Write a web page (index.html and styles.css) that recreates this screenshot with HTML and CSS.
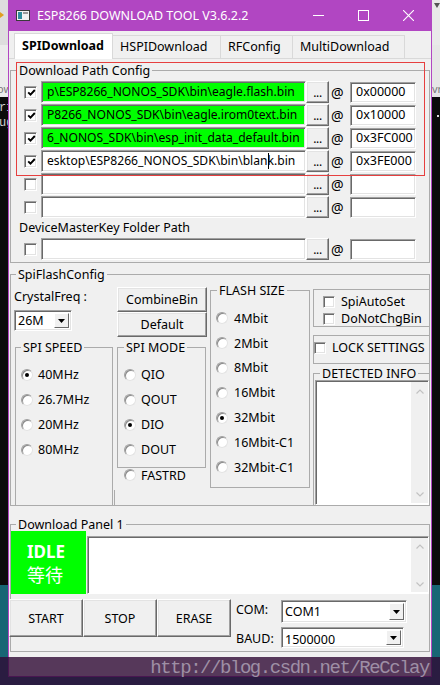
FILE: index.html
```html
<!DOCTYPE html>
<html lang="en">
<head>
<meta charset="utf-8">
<title>ESP8266 DOWNLOAD TOOL V3.6.2.2</title>
<link rel="stylesheet" href="styles.css">
</head>
<body>
<div class="desk">
  <div class="strip">
    <div class="bg-top"><span class="ymark"></span></div>
    <div class="bg-light"><span class="peek">ow</span></div>
    <div class="bg-black"><span class="con">r1</span><span class="con">ug</span></div>
    <div class="bg-teal"></div>
  </div>

  <div class="window">
    <div class="titlebar">
      <svg class="appicon" width="14" height="11" viewBox="0 0 14 11">
        <rect x="0.5" y="0.5" width="13" height="10" fill="#f2f2f2" stroke="#3a3a3a"/>
        <rect x="2" y="2" width="4" height="7" fill="#2f8c9e"/>
        <rect x="7" y="2" width="5" height="2" fill="#9a9a9a"/>
      </svg>
      <span class="title">ESP8266 DOWNLOAD TOOL V3.6.2.2</span>
      <span class="wbtn"><svg width="11" height="1" viewBox="0 0 11 1"><rect width="11" height="1" fill="#fff"/></svg></span>
      <span class="wbtn"><svg width="11" height="11" viewBox="0 0 11 11"><rect x="0.5" y="0.5" width="10" height="10" fill="none" stroke="#fff"/></svg></span>
      <span class="wbtn"><svg width="11" height="11" viewBox="0 0 11 11"><path d="M0 0L11 11M11 0L0 11" stroke="#fff" stroke-width="1.1"/></svg></span>
    </div>

    <div class="client">
      <div class="tabs">
        <div class="tab sel">SPIDownload</div>
        <div class="tab t2">HSPIDownload</div>
        <div class="tab t3">RFConfig</div>
        <div class="tab t4">MultiDownload</div>
      </div>

      <div class="tabpage">
        <fieldset class="grp g-path">
          <legend>Download Path Config</legend>
          <div class="rows">
            <div class="row">
              <span class="cb on"><svg viewBox="0 0 9 9"><polyline points="1.2,4.3 3.5,6.6 7.8,2"/></svg></span>
              <span class="edit path green">p\ESP8266_NONOS_SDK\bin\eagle.flash.bin</span>
              <span class="btn dots">...</span>
              <span class="at">@</span>
              <span class="edit addr">0x00000</span>
            </div>
            <div class="row">
              <span class="cb on"><svg viewBox="0 0 9 9"><polyline points="1.2,4.3 3.5,6.6 7.8,2"/></svg></span>
              <span class="edit path green">P8266_NONOS_SDK\bin\eagle.irom0text.bin</span>
              <span class="btn dots">...</span>
              <span class="at">@</span>
              <span class="edit addr">0x10000</span>
            </div>
            <div class="row">
              <span class="cb on"><svg viewBox="0 0 9 9"><polyline points="1.2,4.3 3.5,6.6 7.8,2"/></svg></span>
              <span class="edit path green">6_NONOS_SDK\bin\esp_init_data_default.bin</span>
              <span class="btn dots">...</span>
              <span class="at">@</span>
              <span class="edit addr">0x3FC000</span>
            </div>
            <div class="row">
              <span class="cb on"><svg viewBox="0 0 9 9"><polyline points="1.2,4.3 3.5,6.6 7.8,2"/></svg></span>
              <span class="edit path">esktop\ESP8266_NONOS_SDK\bin\blan<i class="caret"></i>k.bin</span>
              <span class="btn dots">...</span>
              <span class="at">@</span>
              <span class="edit addr">0x3FE000</span>
            </div>
            <div class="row">
              <span class="cb"></span>
              <span class="edit path"></span>
              <span class="btn dots">...</span>
              <span class="at">@</span>
              <span class="edit addr"></span>
            </div>
            <div class="row">
              <span class="cb"></span>
              <span class="edit path"></span>
              <span class="btn dots">...</span>
              <span class="at">@</span>
              <span class="edit addr"></span>
            </div>
            <div class="label-row">DeviceMasterKey Folder Path</div>
            <div class="row">
              <span class="cb"></span>
              <span class="edit path"></span>
              <span class="btn dots">...</span>
              <span class="at">@</span>
              <span class="edit addr"></span>
            </div>
          </div>
        </fieldset>
      </div>

      <fieldset class="grp g-spi">
        <legend>SpiFlashConfig</legend>
        <div class="spi-body">
          <div class="col c1">
            <div class="lbl">CrystalFreq :</div>
            <div class="combo cf">
              <span class="ctext">26M</span>
              <span class="dd"><svg width="7" height="4" viewBox="0 0 7 4"><path d="M0 0H7L3.5 4Z"/></svg></span>
            </div>
            <fieldset class="grp g-speed">
              <legend>SPI SPEED</legend>
              <div class="radios">
                <div class="ritem"><span class="rb on"></span>40MHz</div>
                <div class="ritem"><span class="rb"></span>26.7MHz</div>
                <div class="ritem"><span class="rb"></span>20MHz</div>
                <div class="ritem"><span class="rb"></span>80MHz</div>
              </div>
            </fieldset>
          </div>

          <div class="col c2">
            <div class="btn big b-combine">CombineBin</div>
            <div class="btn big">Default</div>
            <fieldset class="grp g-mode">
              <legend>SPI MODE</legend>
              <div class="radios">
                <div class="ritem"><span class="rb"></span>QIO</div>
                <div class="ritem"><span class="rb"></span>QOUT</div>
                <div class="ritem"><span class="rb on"></span>DIO</div>
                <div class="ritem"><span class="rb"></span>DOUT</div>
              </div>
            </fieldset>
            <div class="ritem fastrd"><span class="rb"></span>FASTRD</div>
            <div class="frame-tail"></div>
          </div>

          <div class="col c3">
            <fieldset class="grp g-flash">
              <legend>FLASH SIZE</legend>
              <div class="radios flash">
                <div class="ritem"><span class="rb"></span>4Mbit</div>
                <div class="ritem"><span class="rb"></span>2Mbit</div>
                <div class="ritem"><span class="rb"></span>8Mbit</div>
                <div class="ritem"><span class="rb"></span>16Mbit</div>
                <div class="ritem"><span class="rb on"></span>32Mbit</div>
                <div class="ritem"><span class="rb"></span>16Mbit-C1</div>
                <div class="ritem"><span class="rb"></span>32Mbit-C1</div>
              </div>
            </fieldset>
          </div>

          <div class="col c4">
            <div class="box box-auto">
              <div class="citem"><span class="cb sm"></span>SpiAutoSet</div>
              <div class="citem"><span class="cb sm"></span>DoNotChgBin</div>
            </div>
            <div class="box box-lock">
              <div class="citem lock"><span class="cb sm"></span>LOCK SETTINGS</div>
            </div>
            <fieldset class="grp g-info">
              <legend>DETECTED INFO</legend>
              <div class="memo info">
                <div class="memo-area"></div>
                <div class="sb">
                  <svg width="8" height="5" viewBox="0 0 8 5"><path d="M0.5 4.5L4 1L7.5 4.5" fill="none" stroke="#c2c2c2" stroke-width="1.2"/></svg>
                  <svg width="8" height="5" viewBox="0 0 8 5"><path d="M0.5 0.5L4 4L7.5 0.5" fill="none" stroke="#c2c2c2" stroke-width="1.2"/></svg>
                </div>
              </div>
            </fieldset>
          </div>
        </div>
      </fieldset>

      <fieldset class="grp g-dl">
        <legend>Download Panel 1</legend>
        <div class="dl-top">
          <div class="idle"><b>IDLE</b><span class="cn">等待</span></div>
          <div class="memo log">
            <div class="memo-area"></div>
            <div class="sb">
              <svg width="8" height="5" viewBox="0 0 8 5"><path d="M0.5 4.5L4 1L7.5 4.5" fill="none" stroke="#c2c2c2" stroke-width="1.2"/></svg>
              <svg width="8" height="5" viewBox="0 0 8 5"><path d="M0.5 0.5L4 4L7.5 0.5" fill="none" stroke="#c2c2c2" stroke-width="1.2"/></svg>
            </div>
          </div>
        </div>
        <div class="dl-bottom">
          <div class="btn act">START</div>
          <div class="btn act">STOP</div>
          <div class="btn act">ERASE</div>
          <div class="port">
            <div class="prow com">
              <span class="plbl">COM:</span>
              <div class="combo w-com">
                <span class="ctext">COM1</span>
                <span class="dd"><svg width="7" height="4" viewBox="0 0 7 4"><path d="M0 0H7L3.5 4Z"/></svg></span>
              </div>
            </div>
            <div class="prow baud">
              <span class="plbl">BAUD:</span>
              <div class="combo w-baud">
                <span class="ctext">1500000</span>
                <span class="dd"><svg width="7" height="4" viewBox="0 0 7 4"><path d="M0 0H7L3.5 4Z"/></svg></span>
              </div>
            </div>
          </div>
        </div>
      </fieldset>
    </div>
  </div>

  <div class="strip">
    <div class="bg-top r"><span class="tri"></span></div>
    <div class="bg-light r"><span class="peek r">vr</span></div>
    <div class="bg-black"><span class="dot"></span></div>
    <div class="bg-teal"></div>
  </div>
</div>

<div class="redmark"></div>
<div class="watermark">http://blog.csdn.net/ReCclay</div>
</body>
</html>
```

FILE: styles.css
```css
* { box-sizing: border-box; }
html, body { margin: 0; padding: 0; }
body {
  width: 440px;
  height: 685px;
  overflow: hidden;
  position: relative;
  background: #176674;
  font-family: "Noto Sans", "DejaVu Sans", sans-serif;
  font-size: 12.5px;
  color: #000;
}

/* desktop */
.desk { display: flex; height: 685px; }
.strip { width: 8px; flex: none; display: flex; flex-direction: column; overflow: hidden; }
.bg-top { height: 45px; background: #dedede; position: relative; }
.bg-top.r { background: #e9e9e9; }
.bg-light { height: 52px; background: #ececec; font-size: 11px; color: #7a7a7a; line-height: 12px; padding-top: 38px; white-space: nowrap; }
.bg-light.r { background: #e6e6e6; }
.bg-black { height: 488px; background: #0c0c0c; display: flex; flex-direction: column; padding-top: 4px; }
.bg-teal { flex: 1; background: #176674; }
.ymark { position: absolute; left: 0; top: 12px; width: 0; height: 0; border-top: 3px solid transparent; border-bottom: 3px solid transparent; border-left: 4px solid #e0a020; }
.tri { position: absolute; right: 0; top: 3px; width: 0; height: 0; border-left: 3px solid transparent; border-right: 3px solid transparent; border-top: 5px solid #555; }
.peek { display: block; margin-left: -3px; }
.peek.r { margin-left: 0; }
.con { display: block; font-family: "Liberation Mono", monospace; font-size: 12px; line-height: 15px; color: #d0d0d0; white-space: nowrap; margin-left: -1px; }
.dot { display: block; width: 2px; height: 2px; background: #ddd; margin: 14px 0 0 5px; }

/* window */
.window {
  width: 424px;
  height: 677px;
  flex: none;
  border: 1px solid #b146c2;
  border-top: 0;
  background: #f0f0f0;
  display: flex;
  flex-direction: column;
}
.titlebar {
  height: 31px;
  flex: none;
  background: #b146c2;
  color: #fff;
  display: flex;
  align-items: center;
}
.appicon { margin-left: 7px; flex: none; }
.title { margin-left: 7px; flex: 1; font-size: 12.5px; white-space: nowrap; }
.wbtn { width: 45px; height: 31px; display: flex; align-items: center; justify-content: center; flex: none; }

.client { flex: 1; display: flex; flex-direction: column; }

/* tabs */
.tabs { height: 27px; flex: none; display: flex; align-items: flex-end; padding-left: 5px; }
.tab {
  height: 23px;
  width: 108px;
  border: 1px solid #d9d9d9;
  border-bottom: 0;
  border-left: 0;
  background: #f0f0f0;
  padding-left: 7px;
  line-height: 21px;
  font-size: 12.5px;
  white-space: nowrap;
}
.tab.sel {
  width: 99px;
  height: 26px;
  border-left: 1px solid #d9d9d9;
  background: #fff;
  font-weight: bold;
  line-height: 24px;
  margin-bottom: -1px;
  position: relative;
  z-index: 1;
}
.tab.t3 { width: 72px; }
.tab.t4 { width: 112px; }

.tabpage { height: 205px; flex: none; border-top: 1px solid #d9d9d9; padding-top: 5px; }

/* group boxes */
.grp { margin: 0; padding: 0; border: 1px solid #ababab; min-width: 0; }
.grp legend { padding: 0 2px; height: 13px; line-height: 13px; font-size: 12.5px; margin-left: 6px; white-space: nowrap; }

.g-path { height: 199px; margin: 0 1px; }
.rows { padding: 4px 0 0 13px; display: flex; flex-direction: column; gap: 1px; }
.row { display: flex; align-items: center; height: 22px; }
.label-row { height: 18px; line-height: 18px; margin-left: -5px; }

.cb {
  width: 13px;
  height: 13px;
  flex: none;
  background: #fff;
  border: 1px solid;
  border-color: #a0a0a0 #fff #fff #a0a0a0;
  box-shadow: inset 1px 1px 0 #696969, inset -1px -1px 0 #e3e3e3;
  display: inline-flex;
  align-items: center;
  justify-content: center;
  margin-right: 4px;
}
.cb svg { width: 9px; height: 9px; margin: 1px 0 0 1px; }
.cb svg polyline { fill: none; stroke: #000; stroke-width: 1.9; }
.cb.sm { width: 12px; height: 12px; }

.edit {
  display: block;
  height: 22px;
  background: #fff;
  border: 1px solid;
  border-color: #a0a0a0 #fff #fff #a0a0a0;
  box-shadow: inset 1px 1px 0 #696969, inset -1px -1px 0 #e3e3e3;
  white-space: nowrap;
  overflow: hidden;
  line-height: 19px;
  font-size: 12.5px;
}
.edit.path { width: 265px; padding-left: 5px; font-size: 12.1px; }
.edit.green { background: #00ff00; }
.edit.addr { width: 66px; height: 21px; padding-left: 5px; line-height: 18px; }
.caret { display: inline-block; width: 1px; height: 16px; background: #000; vertical-align: -4px; margin-right: -1px; }

.btn {
  background: #f0f0f0;
  border: 1px solid;
  border-color: #fff #696969 #696969 #fff;
  box-shadow: inset -1px -1px 0 #a0a0a0, inset 1px 1px 0 #e3e3e3;
  display: flex;
  align-items: center;
  justify-content: center;
  white-space: nowrap;
}
.dots { width: 23px; height: 22px; flex: none; font-size: 12px; letter-spacing: -0.3px; padding-top: 1px; }
.at { width: 21px; flex: none; padding-left: 2px; font-size: 14px; line-height: 22px; padding-top: 2px; }

/* spi flash config */
.g-spi { height: 238px; margin: 5px 1px 0; flex: none; }
.g-spi > legend { margin-left: 5px; }
.spi-body { height: 224px; display: flex; padding-left: 3px; }
.col { display: flex; flex-direction: column; flex: none; }
.c1 { width: 99px; }
.c2 { width: 90px; margin-left: 4px; }
.c3 { width: 100px; margin-left: 3px; }
.c4 { width: 117px; margin-left: 3px; }

.lbl { margin-top: 8px; height: 16px; line-height: 16px; white-space: nowrap; }

.combo {
  display: flex;
  height: 21px;
  background: #fff;
  border: 1px solid;
  border-color: #a0a0a0 #fff #fff #a0a0a0;
  box-shadow: inset 1px 1px 0 #696969, inset -1px -1px 0 #e3e3e3;
  padding: 2px;
}
.ctext { flex: 1; padding-left: 1px; line-height: 15px; white-space: nowrap; }
.dd {
  width: 15px;
  flex: none;
  background: #f0f0f0;
  border: 1px solid;
  border-color: #fff #696969 #696969 #fff;
  display: flex;
  align-items: center;
  justify-content: center;
}
.dd svg path { fill: #000; }
.combo.cf { width: 58px; margin-top: 5px; }

.g-speed { margin: 10px 0 0 1px; width: 98px; height: 164px; border-bottom: 0; }
.g-speed > legend { margin-left: 5px; }
.radios { padding: 8px 0 0 5px; }
.ritem { display: flex; align-items: center; height: 25px; white-space: nowrap; }
.rb {
  width: 12px;
  height: 12px;
  flex: none;
  border-radius: 50%;
  background: #fff;
  border: 1px solid;
  border-color: #a0a0a0 #e3e3e3 #e3e3e3 #a0a0a0;
  box-shadow: inset 1px 1px 0 #8a8a8a;
  margin-right: 5px;
  display: inline-flex;
  align-items: center;
  justify-content: center;
}
.rb.on::after { content: ""; width: 4px; height: 4px; border-radius: 50%; background: #000; }

.big { height: 25px; width: 90px; }
.b-combine { margin-top: 6px; }
.g-mode { margin-top: 4px; width: 89px; height: 127px; }
.g-mode .radios { padding-left: 6px; }
.fastrd { height: 14px; padding-left: 7px; }
.frame-tail { flex: 1; margin: 8px 0 0 -3px; border-left: 1px solid #ababab; }

.g-flash { margin-top: 3px; width: 100px; height: 204px; }
.radios.flash { padding: 9px 0 0 5px; }
.radios.flash .ritem { height: 24.8px; }
.radios.flash .rb { margin-right: 6px; }

.box { border: 1px solid #ababab; width: 117px; }
.box-auto { margin-top: 8px; height: 38px; padding: 3px 0 0 9px; }
.citem { display: flex; align-items: center; height: 17px; white-space: nowrap; }
.citem .cb { margin-right: 6px; }
.box-lock { margin-top: 8px; height: 29px; padding-top: 3px; }
.lock .cb { margin-right: 6px; }

.g-info { margin-top: 3px; width: 117px; height: 138px; border-bottom: 0; }
.memo {
  display: flex;
  background: #fff;
  border: 1px solid;
  border-color: #a0a0a0 #fff #fff #a0a0a0;
  box-shadow: inset 1px 1px 0 #696969;
}
.memo-area { flex: 1; }
.sb { width: 17px; flex: none; background: #f0f0f0; display: flex; flex-direction: column; justify-content: space-between; align-items: center; padding: 7px 0 6px; margin: 1px 0 1px; }
.memo.info { margin-left: 1px; width: 114px; height: 125px; }

/* download panel */
.g-dl { height: 134px; margin: 12px 1px 0; flex: none; }
.g-dl > legend { margin-left: 5px; }
.dl-top { display: flex; align-items: flex-end; height: 63px; }
.idle { width: 75px; height: 63px; flex: none; background: #00ff00; color: #fff; padding: 10px 0 0 16px; overflow: hidden; }
.idle b { display: block; font-size: 17px; line-height: 22px; height: 22px; font-weight: bold; }
.idle .cn { display: block; font-family: "Noto Sans CJK SC", "Noto Sans", sans-serif; font-size: 18px; line-height: 22px; height: 22px; }
.memo.log { margin-left: 1px; width: 342px; height: 58px; }
.memo.log .sb { padding: 6px 0 5px; }

.dl-bottom { display: flex; margin-top: 5px; margin-left: -2px; }
.act { width: 74px; height: 38px; flex: none; font-size: 12.5px; }
.port { margin-left: 5px; display: flex; flex-direction: column; }
.prow { display: flex; align-items: center; }
.plbl { width: 45px; flex: none; white-space: nowrap; font-size: 12.5px; }
.com { margin-top: 1px; }
.baud { margin-top: 4px; }
.com .plbl { margin-top: -4px; }
.baud .plbl { margin-top: 2px; }
.w-com { width: 126px; height: 23px; }
.w-com .ctext { line-height: 17px; }
.w-baud { width: 123px; height: 21px; }
.w-baud .ctext { line-height: 17px; padding-top: 1px; }

/* overlays */
.redmark {
  position: absolute;
  left: 16px;
  top: 62px;
  width: 409px;
  height: 114px;
  border: 1px solid #e63f3f;
  pointer-events: none;
}
.watermark {
  position: absolute;
  left: 0;
  bottom: 0;
  width: 440px;
  height: 28px;
  background: rgba(48, 10, 52, 0.8);
  font-family: "Liberation Mono", monospace;
  font-size: 19px;
  letter-spacing: -1.45px;
  line-height: 22px;
  color: #9e8fa5;
  text-align: right;
  padding-right: 11px;
  white-space: nowrap;
}
```
